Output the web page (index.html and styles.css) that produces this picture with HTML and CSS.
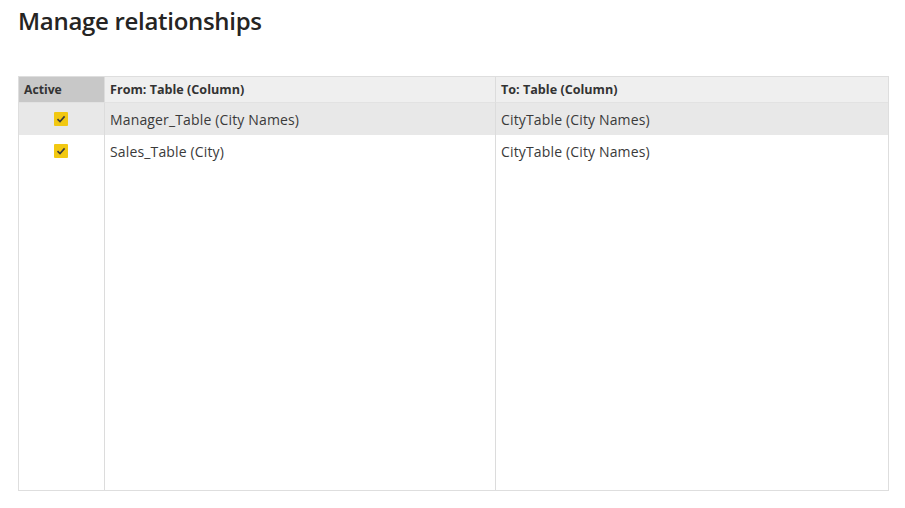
FILE: index.html
```html
<!DOCTYPE html>
<html lang="en">
<head>
<meta charset="utf-8">
<title>Manage relationships</title>
<link rel="stylesheet" href="styles.css">
</head>
<body>
<div class="page">
  <h1 class="title">Manage relationships</h1>
  <div class="grid">
    <div class="cell head head-active">Active</div>
    <div class="cell head">From: Table (Column)</div>
    <div class="cell head last">To: Table (Column)</div>

    <div class="cell sel check-cell"><span class="check"><svg viewBox="0 0 14 14" width="14" height="14"><path d="M3.5 7.2 L6 9.6 L10.6 4.4" fill="none" stroke="#3b3b3b" stroke-width="1.6"/></svg></span></div>
    <div class="cell sel">Manager_Table (City Names)</div>
    <div class="cell sel last">CityTable (City Names)</div>

    <div class="cell check-cell"><span class="check"><svg viewBox="0 0 14 14" width="14" height="14"><path d="M3.5 7.2 L6 9.6 L10.6 4.4" fill="none" stroke="#3b3b3b" stroke-width="1.6"/></svg></span></div>
    <div class="cell">Sales_Table (City)</div>
    <div class="cell last">CityTable (City Names)</div>

    <div class="cell filler"></div>
    <div class="cell filler"></div>
    <div class="cell filler last"></div>
  </div>
</div>
</body>
</html>
```

FILE: styles.css
```css
html, body {
  margin: 0;
  padding: 0;
  background: #ffffff;
}
.page {
  padding: 5px 0 0 18px;
  font-family: "Open Sans", "Noto Sans", sans-serif;
  color: #3a3a3a;
}
.title {
  margin: 0;
  font-size: 24px;
  font-weight: 600;
  color: #252423;
  line-height: 32px;
  letter-spacing: -0.3px;
}
.grid {
  margin-top: 39px;
  width: 869px;
  height: 413px;
  display: grid;
  grid-template-columns: 86px 391px 1fr;
  grid-template-rows: 26px 32px 32px 1fr;
  border: 1px solid #dedede;
}
.cell {
  display: flex;
  align-items: center;
  padding-left: 5px;
  font-size: 14px;
  letter-spacing: 0.15px;
  border-right: 1px solid #dcdcdc;
  white-space: nowrap;
}
.cell.last {
  border-right: none;
}
.head {
  background: #efefef;
  font-weight: 700;
  font-size: 12.6px;
  letter-spacing: 0;
  color: #333;
  border-bottom: 1px solid #e2e2e2;
}
.head-active {
  background: #c8c8c8;
  padding-left: 5px;
  font-size: 12.2px;
}
.sel {
  background: #e8e8e8;
}
.check-cell {
  justify-content: center;
  padding-left: 0;
  padding-right: 2px;
}
.check {
  display: block;
  width: 14px;
  height: 14px;
  background: #f2c811;
  border-radius: 1px;
}
.check svg {
  display: block;
}
```
